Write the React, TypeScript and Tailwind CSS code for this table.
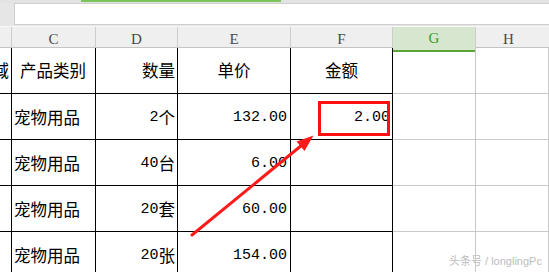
import React from 'react';

const cjk = { fontFamily: '"Noto Sans CJK SC", sans-serif' };

const Cn = ({ children }: { children: React.ReactNode }) => (
  <span className="text-[16.5px] leading-none" style={cjk}>{children}</span>
);

const Num = ({ children }: { children: React.ReactNode }) => (
  <span className="font-['Liberation_Mono',monospace] text-[15px] leading-none">{children}</span>
);

const rows = [
  { cat: '宠物用品', qty: '2', unit: '个', price: '132.00', amount: '2.00' },
  { cat: '宠物用品', qty: '40', unit: '台', price: '6.00', amount: '' },
  { cat: '宠物用品', qty: '20', unit: '套', price: '60.00', amount: '' },
  { cat: '宠物用品', qty: '20', unit: '张', price: '154.00', amount: '' },
];

const black = 'border-r border-b border-black';
const gray = 'border-r border-b border-[#c8c8c8]';

export default function App() {
  return (
    <div className="relative w-[549px] h-[272px] overflow-hidden bg-white text-black">
      {/* top strip */}
      <div className="h-[3px] bg-[#e3e3e3]">
        <div className="ml-[81px] w-[200px] h-[2px] bg-[#7cc35a]" />
      </div>

      {/* formula bar */}
      <div className="h-[23px] bg-[#e6e6e6] pl-[14px] pb-[1px]">
        <div className="h-full bg-white border border-[#cfcfcf] border-r-0" />
      </div>

      {/* column letters */}
      <div className="grid grid-cols-[12px_84px_82px_113px_102px_83px_1fr] h-[22px] bg-[#efefef] border-t border-[#f8f8f8] border-b border-b-[#c4c4c4] font-['Liberation_Serif',serif] text-[15px] text-[#4a4a4a]">
        <div className="border-r border-[#cdcdcd]" />
        {['C', 'D', 'E', 'F'].map(l => (
          <div key={l} className="flex items-center justify-center border-r border-[#cdcdcd]">{l}</div>
        ))}
        <div className="flex items-center justify-center bg-[#d7e7cf] border-r border-[#cdcdcd] border-b-2 border-b-[#5aa634] text-[#3d9a1c] -mb-[1px]">G</div>
        <div className="flex items-center justify-center pr-[8px]">H</div>
      </div>

      {/* sheet body */}
      <div className="grid grid-cols-[12px_84px_82px_113px_102px_83px_1fr] auto-rows-[46px]">
        <div className={`${black} flex items-center justify-end overflow-hidden pr-[2px]`}><Cn>域</Cn></div>
        <div className={`${black} flex items-center pl-[8px]`}><Cn>产品类别</Cn></div>
        <div className={`${black} flex items-center justify-end pr-[2px]`}><Cn>数量</Cn></div>
        <div className={`${black} flex items-center justify-center`}><Cn>单价</Cn></div>
        <div className={`${black} flex items-center justify-center`}><Cn>金额</Cn></div>
        <div className={gray} />
        <div className={gray} />

        {rows.map((r, i) => (
          <React.Fragment key={i}>
            <div className={black} />
            <div className={`${black} flex items-center pl-[2px] pt-[1px]`}><Cn>{r.cat}</Cn></div>
            <div className={`${black} flex items-center justify-end pr-[2px] pt-[1px]`}>
              <Num>{r.qty}</Num><Cn>{r.unit}</Cn>
            </div>
            <div className={`${black} flex items-center justify-end pr-[3px] pt-[2px]`}><Num>{r.price}</Num></div>
            <div className={`${black} flex items-center justify-end pr-[2px] pt-[2px]`}><Num>{r.amount}</Num></div>
            <div className={gray} />
            <div className={gray} />
          </React.Fragment>
        ))}
      </div>

      {/* highlight box */}
      <div className="absolute left-[318px] top-[101px] w-[72px] h-[35px] border-[3px] border-[#ff1010]" />

      {/* arrow */}
      <svg className="absolute left-0 top-0 pointer-events-none" width="549" height="272">
        <line x1="192" y1="235" x2="302" y2="145" stroke="#ff1a1a" strokeWidth="3" strokeLinecap="round" />
        <polygon points="313.5,135.5 296.5,141.5 304.5,151" fill="#ff1a1a" />
      </svg>

      {/* watermark */}
      <div className="absolute left-[449px] top-[254px] whitespace-nowrap text-[11px] leading-[14px] text-[#bdbdbd] [text-shadow:0_0_1px_#ffffff]" style={{ fontFamily: '"Liberation Sans", "Noto Sans CJK SC", sans-serif' }}>
        头条号 / longlingPc
      </div>
    </div>
  );
}
